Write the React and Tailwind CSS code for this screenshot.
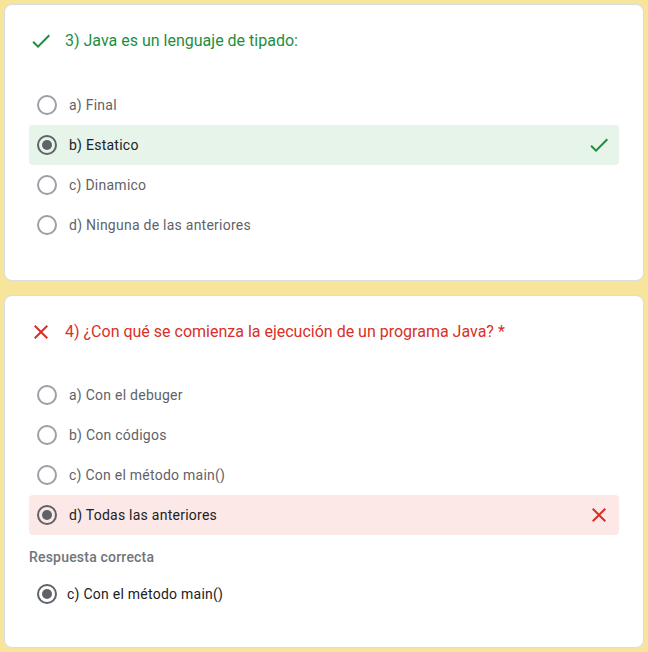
import React from "react";

const CHECK = "M9 16.17L4.83 12l-1.42 1.41L9 19 21 7l-1.41-1.41z";
const CLOSE =
  "M19 6.41L17.59 5 12 10.59 6.41 5 5 6.41 10.59 12 5 17.59 6.41 19 12 13.41 17.59 19 19 17.59 13.41 12z";

function Icon({ d, color }) {
  return (
    <svg width="24" height="24" viewBox="0 0 24 24" className="shrink-0">
      <path d={d} fill={color} />
    </svg>
  );
}

function Radio({ checked }) {
  return checked ? (
    <span className="flex h-5 w-5 shrink-0 items-center justify-center rounded-full border-2 border-[#5f6368]">
      <span className="h-[10px] w-[10px] rounded-full bg-[#5f6368]" />
    </span>
  ) : (
    <span className="h-5 w-5 shrink-0 rounded-full border-2 border-[#9aa0a6]" />
  );
}

function Option({ label, checked, state }) {
  const bg =
    state === "right" ? "bg-[#e6f4ea]" : state === "wrong" ? "bg-[#fce8e6]" : "";
  return (
    <div className={`flex h-10 items-center rounded-[4px] pl-2 pr-2 ${bg}`}>
      <Radio checked={checked} />
      <span
        className={`ml-[12px] flex-1 text-[14px] tracking-[0.25px] ${
          checked ? "text-[#202124]" : "text-[#5f6368]"
        }`}
      >
        {label}
      </span>
      {state === "right" && <Icon d={CHECK} color="#1e8e3e" />}
      {state === "wrong" && <Icon d={CLOSE} color="#d93025" />}
    </div>
  );
}

function Card({ children, className }) {
  return (
    <div
      className={`rounded-lg border border-[#dadce0] bg-white px-6 pt-6 ${className}`}
    >
      {children}
    </div>
  );
}

export default function App() {
  return (
    <div className="flex min-h-screen flex-col gap-[14px] bg-[#f8e59c] p-1 font-['Roboto',sans-serif]">
      {/* Pregunta 3 */}
      <Card className="h-[277px]">
        <div className="flex h-6 items-center">
          <Icon d={CHECK} color="#1e8e3e" />
          <span className="ml-[12px] text-[16px] text-[#1e8e3e]">
            3) Java es un lenguaje de tipado:
          </span>
        </div>
        <div className="mt-[32px] flex flex-col">
          <Option label="a) Final" />
          <Option label="b) Estatico" checked state="right" />
          <Option label="c) Dinamico" />
          <Option label="d) Ninguna de las anteriores" />
        </div>
      </Card>

      {/* Pregunta 4 */}
      <Card className="h-[353px]">
        <div className="flex h-6 items-center">
          <Icon d={CLOSE} color="#d93025" />
          <span className="ml-[12px] text-[16px] text-[#d93025]">
            4) ¿Con qué se comienza la ejecución de un programa Java? *
          </span>
        </div>
        <div className="mt-[31px] flex flex-col">
          <Option label="a) Con el debuger" />
          <Option label="b) Con códigos" />
          <Option label="c) Con el método main()" />
          <Option label="d) Todas las anteriores" checked state="wrong" />
        </div>
        <div className="mt-3 h-5 text-[14px] font-medium leading-5 tracking-[0.2px] text-[#70757a]">
          Respuesta correcta
        </div>
        <div className="mt-[7px] flex h-10 items-center pl-2">
          <Radio checked />
          <span className="ml-[10px] text-[14px] tracking-[0.25px] text-[#202124]">
            c) Con el método main()
          </span>
        </div>
      </Card>
    </div>
  );
}
